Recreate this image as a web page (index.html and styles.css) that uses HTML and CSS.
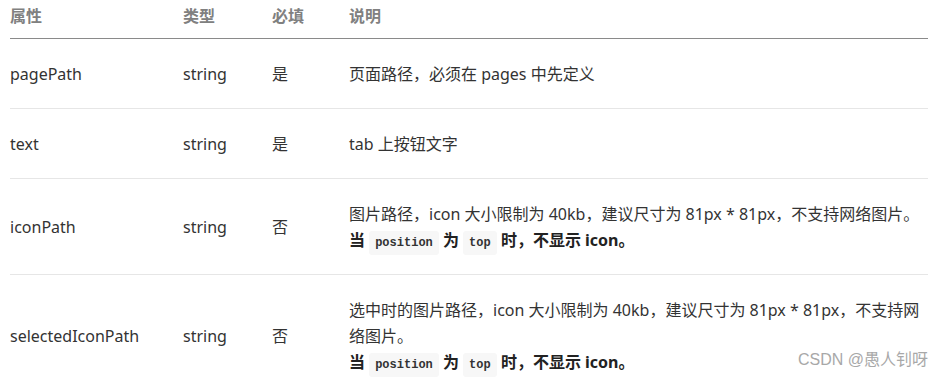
FILE: index.html
```html
<!DOCTYPE html>
<html lang="zh-CN">
<head>
<meta charset="utf-8">
<title>tabBar list</title>
<link rel="stylesheet" href="styles.css">
</head>
<body>
<div class="page">
  <table class="props">
    <colgroup>
      <col class="c-name">
      <col class="c-type">
      <col class="c-req">
      <col class="c-desc">
    </colgroup>
    <thead>
      <tr>
        <th>属性</th>
        <th>类型</th>
        <th>必填</th>
        <th>说明</th>
      </tr>
    </thead>
    <tbody>
      <tr>
        <td class="lg">pagePath</td>
        <td class="lg">string</td>
        <td class="lg">是</td>
        <td class="desc">页面路径，必须在 pages 中先定义</td>
      </tr>
      <tr>
        <td class="lg">text</td>
        <td class="lg">string</td>
        <td class="lg">是</td>
        <td class="desc">tab 上按钮文字</td>
      </tr>
      <tr>
        <td class="lg">iconPath</td>
        <td class="lg">string</td>
        <td class="lg">否</td>
        <td class="desc">图片路径，icon 大小限制为 40kb，建议尺寸为 81px * 81px，不支持网络图片。<br><strong>当 <code>position</code> 为 <code>top</code> 时，不显示 icon。</strong></td>
      </tr>
      <tr>
        <td class="lg">selectedIconPath</td>
        <td class="lg">string</td>
        <td class="lg">否</td>
        <td class="desc">选中时的图片路径，icon 大小限制为 40kb，建议尺寸为 81px * 81px，不支持网络图片。<br><strong>当 <code>position</code> 为 <code>top</code> 时，不显示 icon。</strong></td>
      </tr>
    </tbody>
  </table>
  <div class="watermark">CSDN @愚人钊呀</div>
</div>
</body>
</html>
```

FILE: styles.css
```css
html, body {
  margin: 0;
  padding: 0;
  background: #ffffff;
}

body {
  font-family: "Noto Sans", "Noto Sans CJK SC", sans-serif;
  color: #333333;
  overflow: hidden;
}

.page {
  position: relative;
  width: 944px;
  height: 381px;
  padding: 0 16px 0 10px;
  box-sizing: border-box;
}

.props {
  width: 918px;
  border-collapse: collapse;
  table-layout: fixed;
}

.c-name { width: 173px; }
.c-type { width: 89px; }
.c-req { width: 77px; }

.props th {
  text-align: left;
  font-size: 16px;
  font-weight: 700;
  color: #808080;
  line-height: 26px;
  padding: 2px 0 10px 0;
  border-bottom: 1px solid #8a8a8a;
  font-family: "Noto Sans CJK SC", sans-serif;
}

.props td {
  padding: 22px 0 21px 0;
  border-bottom: 1px solid #e6e6e6;
  vertical-align: middle;
}

.props td.lg {
  font-size: 16px;
  line-height: 26px;
}

.props td.desc {
  font-size: 16px;
  line-height: 26px;
}

.props strong {
  font-weight: 700;
  color: #222222;
}

.props code {
  font-family: "Liberation Mono", "DejaVu Sans Mono", monospace;
  font-size: 12px;
  line-height: 16px;
  font-weight: 700;
  color: #333333;
  background: #f7f7f7;
  border-radius: 3px;
  padding: 5px 6px;
}

.watermark {
  position: absolute;
  right: 16px;
  bottom: 11px;
  font-family: "Liberation Sans", "Noto Sans CJK SC", sans-serif;
  font-size: 16px;
  color: #a8a8a8;
}
```
